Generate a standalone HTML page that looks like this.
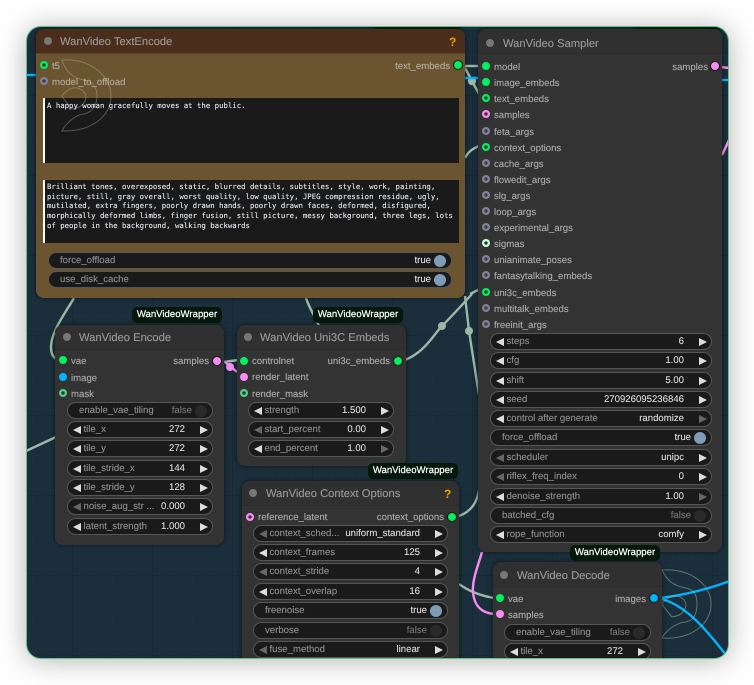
<!DOCTYPE html>
<html><head><meta charset="utf-8">
<style>
html,body{margin:0;padding:0;background:#fff;width:754px;height:685px;overflow:hidden}
body{font-family:"Liberation Sans",Arial,sans-serif;text-rendering:geometricPrecision}
#f{position:absolute;left:26px;top:26px;width:701px;height:631px;border:1px solid #62c083;border-radius:15px;overflow:hidden;background-color:#1a2e3b;box-shadow:0 2px 28px rgba(0,0,0,.3)}
#i{position:absolute;left:-27px;top:-27px;width:754px;height:685px;filter:blur(.25px);
background-image:linear-gradient(#172933 1px,transparent 1px),linear-gradient(90deg,#172933 1px,transparent 1px),linear-gradient(#1c303d 1px,transparent 1px),linear-gradient(90deg,#1c303d 1px,transparent 1px);
background-size:80px 80px,80px 80px,10px 10px,10px 10px;background-position:-8px 15px,-8px 15px,2px 5px,2px 5px}
.n{position:absolute;background:#333;border-radius:8px;box-shadow:0 0 5px rgba(0,0,0,.55)}
.h{position:absolute;left:0;right:0;top:0;height:24px;background:#303030;border-bottom:1px solid #2b2b2b;border-radius:8px 8px 0 0}
.a{position:absolute;white-space:nowrap}
.ti{font-size:11.2px;line-height:16px;color:#999;margin-top:1px;-webkit-text-stroke:.12px #999}
.b{width:8px;height:8px;border-radius:50%;background:#777}
.q{font-size:12px;font-weight:bold;color:#f0a000;line-height:14px;margin-top:0}
.s{width:8px;height:8px;border-radius:50%;box-sizing:border-box}
.l{font-size:9.6px;line-height:14px;color:#aaa;margin-top:2px;-webkit-text-stroke:.12px #aaa}
.g{background:#00f060}.c{background:#00b4ff}.p{background:#f78cf0}
.rg{background:radial-gradient(circle,#2f3a30 1.4px,#00f060 2px)}
.rp{background:radial-gradient(circle,#333 1.4px,#f78cf0 2px)}
.rx{background:radial-gradient(circle,#3f3f3f 1.4px,#80809a 2px)}
.rm{background:radial-gradient(circle,#333 1.4px,#4fd184 2px)}
.rw{background:radial-gradient(circle,#333 1.4px,#c8ffdc 2px)}
.o{box-shadow:0 0 0 1px #111}
.w{position:absolute;height:15px;box-sizing:content-box;border:1px solid #565656;border-radius:9px;background:#1a1a1a;font-size:9.6px;line-height:16px;color:#8f8f8f;white-space:nowrap;-webkit-text-stroke:.1px}
.w u{text-decoration:none;position:absolute;left:15.5px}
.w b{font-weight:normal;position:absolute;right:27px;color:#ddd}
.w i{position:absolute;top:3.5px;width:0;height:0;border-top:4px solid transparent;border-bottom:4px solid transparent}
.w i.x{left:4.5px;border-right:8px solid #ddd}
.w i.y{right:4.5px;border-left:8px solid #ddd}
.w i.d{opacity:.4}
.t u{left:11px}
.t b{right:20px}
.t s{position:absolute;right:5px;top:1.5px;width:12px;height:12px;border-radius:50%;background:#809bb5}
.t s.f{background:#2a2a2a}
.t b.f{color:#777}
.tag{position:absolute;width:90px;height:16px;border-radius:5px;background:#04190c;color:#fff;font-size:9.6px;line-height:16px;text-align:center;-webkit-text-stroke:.2px #fff}
.ta{position:absolute;left:43px;width:412px;background:#1a1a1a;border-left:2px solid #fff;font-family:"DejaVu Sans Mono",monospace;font-size:7.34px;line-height:9.7px;color:#e6ecf2;white-space:pre;padding:2px 0 0 2px;box-sizing:content-box;-webkit-text-stroke:.08px}
.ta span{position:relative;display:block}
svg{position:absolute;left:0;top:0}
</style></head><body>
<div id="f"><div id="i">

<svg width="754" height="685" fill="none">
<g stroke="#9db8a8" stroke-width="2.4">
<path d="M74 298C66 312 52 330 51 346C51 352 52 356 56 359"/>
<path d="M26 451L56 437"/>
<path d="M306 298C309 308 315 316 319 326"/>
<path d="M405 360C425 352 434 334 442 326C450 318 462 305 472 294"/>
<path d="M465 296L469 331L479 395"/>
<path d="M464 66H479"/>
<path d="M465 68L479 94"/>
<path d="M465 158C468 152 472 149 479 146"/>
<path d="M224 362L238 360"/>
<path d="M459 516C470 512 477 503 479 490"/>
<path d="M459 584C470 592 482 596 494 598"/>
<path d="M470 294L480 289"/>
</g>
<circle cx="472" cy="81" r="4.2" fill="#9db8a8"/>
<circle cx="442" cy="326" r="4" fill="#9db8a8"/>
<circle cx="469" cy="331" r="4" fill="#9db8a8"/>
<g stroke="#f78cf0" stroke-width="2.4">
<path d="M225 362L237 372"/>
<path d="M482 552C478 566 472 580 473 592C474 606 482 613 494 614"/>
<path d="M720 67L730 68"/>
<path d="M722 155L730 138"/>
</g>
<circle cx="230" cy="367" r="4" fill="#f78cf0"/>
<g stroke="#00b4ff" stroke-width="2.4">
<path d="M26 75H37"/>
<path d="M465 78H480"/>
<path d="M720 80H730"/>
<path d="M658 598C680 596 705 590 730 581"/>
<path d="M658 598C685 604 705 628 726 655"/>
</g>
<g stroke="#9cc4a8" stroke-opacity=".5" stroke-width="1">
<path d="M662 570C690 568 711 584 711 604C711 625 690 640 662 638C666 630 678 622 686 622C695 620 697 612 697 604C697 596 695 590 686 588C673 586 667 580 662 570Z"/>
<path d="M662 604C666 598 672 595 677 596C683 597 686 602 686 605C685 612 680 616 672 617C668 612 665 609 662 604Z"/>
</g>
</svg>

<div class="n" style="left:36px;top:29px;width:429px;height:269px;background:#6b5430">
<div class="h" style="background:#4a2d1a;border-bottom:1px solid #5a4225"></div>
</div>
<div class="b a" style="left:44px;top:37px"></div>
<div class="a ti" style="left:60px;top:33px">WanVideo TextEncode</div>
<div class="a q" style="left:449px;top:35px">?</div>
<div class="a s rg" style="left:40px;top:60.5px"></div>
<div class="a l" style="left:52px;top:58px;color:#b5ab98">t5</div>
<div class="a s rx" style="left:40px;top:77px"></div>
<div class="a l" style="left:52px;top:74px;color:#b5ab98">model_to_offload</div>
<div class="a l" style="right:304px;top:58px;color:#b5ab98">text_embeds</div>
<div class="a s g o" style="left:454px;top:61px"></div>

<div class="ta" style="top:98px;height:63px"><span style="top:1px">A happy woman gracefully moves at the public.</span></div>
<div class="ta" style="top:180px;height:61px"><span>Brilliant tones, overexposed, static, blurred details, subtitles, style, work, painting,
picture, still, gray overall, worst quality, low quality, JPEG compression residue, ugly,
mutilated, extra fingers, poorly drawn hands, poorly drawn faces, deformed, disfigured,
morphically deformed limbs, finger fusion, still picture, messy background, three legs, lots
of people in the background, walking backwards</span></div>

<div class="w t" style="left:48px;top:252px;width:402px"><u>force_offload</u><b>true</b><s></s></div>
<div class="w t" style="left:48px;top:271px;width:402px"><u>use_disk_cache</u><b>true</b><s></s></div>

<svg width="754" height="685" fill="none"><g stroke="#b8d0bc" stroke-opacity=".35" stroke-width="1">
<path d="M62 60C90 58 111 76 111 96C111 117 90 132 62 131C66 122 78 114 84 114C93 112 97 104 97 96C97 88 93 82 84 80C71 78 65 70 62 60Z"/>
<path d="M62 96C66 90 72 87 77 88C83 89 86 94 86 97C85 104 80 108 72 109C68 104 65 101 62 96Z"/>
</g></svg>

<div class="n" style="left:478px;top:29px;width:244px;height:523px">
<div class="h" style="height:24px"></div>
</div>
<div class="b a" style="left:486px;top:38.5px"></div>
<div class="a ti" style="left:503px;top:35px">WanVideo Sampler</div>
<div class="a l" style="right:46px;top:59px">samples</div>
<div class="a s p o" style="left:711px;top:62px"></div>

<div class="a s g" style="left:482px;top:62px"></div><div class="a l" style="left:494px;top:59px">model</div>
<div class="a s g" style="left:482px;top:78px"></div><div class="a l" style="left:494px;top:75px">image_embeds</div>
<div class="a s rg" style="left:482px;top:94px"></div><div class="a l" style="left:494px;top:91px">text_embeds</div>
<div class="a s rp" style="left:482px;top:110px"></div><div class="a l" style="left:494px;top:107px">samples</div>
<div class="a s rx" style="left:482px;top:127px"></div><div class="a l" style="left:494px;top:124px">feta_args</div>
<div class="a s rg" style="left:482px;top:143px"></div><div class="a l" style="left:494px;top:140px">context_options</div>
<div class="a s rx" style="left:482px;top:159px"></div><div class="a l" style="left:494px;top:156px">cache_args</div>
<div class="a s rx" style="left:482px;top:175px"></div><div class="a l" style="left:494px;top:172px">flowedit_args</div>
<div class="a s rx" style="left:482px;top:191px"></div><div class="a l" style="left:494px;top:188px">slg_args</div>
<div class="a s rx" style="left:482px;top:207px"></div><div class="a l" style="left:494px;top:204px">loop_args</div>
<div class="a s rx" style="left:482px;top:223px"></div><div class="a l" style="left:494px;top:220px">experimental_args</div>
<div class="a s rw" style="left:482px;top:239px"></div><div class="a l" style="left:494px;top:236px">sigmas</div>
<div class="a s rx" style="left:482px;top:255px"></div><div class="a l" style="left:494px;top:252px">unianimate_poses</div>
<div class="a s rx" style="left:482px;top:271px"></div><div class="a l" style="left:494px;top:268px">fantasytalking_embeds</div>
<div class="a s rg" style="left:482px;top:288px"></div><div class="a l" style="left:494px;top:285px">uni3c_embeds</div>
<div class="a s rx" style="left:482px;top:304px"></div><div class="a l" style="left:494px;top:301px">multitalk_embeds</div>
<div class="a s rx" style="left:482px;top:320px"></div><div class="a l" style="left:494px;top:317px">freeinit_args</div>

<div class="w" style="left:490px;top:333px;width:220px"><i class="x"></i><u>steps</u><b>6</b><i class="y"></i></div>
<div class="w" style="left:490px;top:352px;width:220px"><i class="x"></i><u>cfg</u><b>1.00</b><i class="y"></i></div>
<div class="w" style="left:490px;top:372px;width:220px"><i class="x"></i><u>shift</u><b>5.00</b><i class="y"></i></div>
<div class="w" style="left:490px;top:391px;width:220px"><i class="x"></i><u>seed</u><b>270926095236846</b><i class="y"></i></div>
<div class="w" style="left:490px;top:410px;width:220px"><i class="x"></i><u>control after generate</u><b>randomize</b><i class="y d"></i></div>
<div class="w t" style="left:490px;top:429px;width:220px"><u>force_offload</u><b>true</b><s></s></div>
<div class="w" style="left:490px;top:449px;width:220px"><i class="x d"></i><u>scheduler</u><b>unipc</b><i class="y"></i></div>
<div class="w" style="left:490px;top:468px;width:220px"><i class="x d"></i><u>riflex_freq_index</u><b>0</b><i class="y"></i></div>
<div class="w" style="left:490px;top:488px;width:220px"><i class="x"></i><u>denoise_strength</u><b>1.00</b><i class="y d"></i></div>
<div class="w t" style="left:490px;top:507px;width:220px"><u>batched_cfg</u><b class="f">false</b><s class="f"></s></div>
<div class="w" style="left:490px;top:526px;width:220px"><i class="x"></i><u>rope_function</u><b>comfy</b><i class="y"></i></div>

<div class="n" style="left:55px;top:325px;width:169px;height:220px"><div class="h"></div></div>
<div class="b a" style="left:63px;top:333px"></div>
<div class="a ti" style="left:79px;top:329px">WanVideo Encode</div>
<div class="a s g" style="left:59px;top:356px"></div><div class="a l" style="left:71px;top:353px">vae</div>
<div class="a s c" style="left:59px;top:373px"></div><div class="a l" style="left:71px;top:370px">image</div>
<div class="a s rm" style="left:59px;top:389px"></div><div class="a l" style="left:71px;top:386px">mask</div>
<div class="a l" style="right:545px;top:353px">samples</div>
<div class="a s p o" style="left:213px;top:357px"></div>
<div class="w t" style="left:67px;top:402px;width:144px"><u>enable_vae_tiling</u><b class="f">false</b><s class="f"></s></div>
<div class="w" style="left:67px;top:421px;width:144px"><i class="x"></i><u>tile_x</u><b>272</b><i class="y"></i></div>
<div class="w" style="left:67px;top:440px;width:144px"><i class="x"></i><u>tile_y</u><b>272</b><i class="y"></i></div>
<div class="w" style="left:67px;top:460px;width:144px"><i class="x"></i><u>tile_stride_x</u><b>144</b><i class="y"></i></div>
<div class="w" style="left:67px;top:479px;width:144px"><i class="x"></i><u>tile_stride_y</u><b>128</b><i class="y"></i></div>
<div class="w" style="left:67px;top:498px;width:144px"><i class="x d"></i><u>noise_aug_str ...</u><b>0.000</b><i class="y"></i></div>
<div class="w" style="left:67px;top:518px;width:144px"><i class="x"></i><u>latent_strength</u><b>1.000</b><i class="y"></i></div>

<div class="n" style="left:237px;top:325px;width:169px;height:141px"><div class="h"></div></div>
<div class="b a" style="left:244px;top:333px"></div>
<div class="a ti" style="left:260px;top:329px">WanVideo Uni3C Embeds</div>
<div class="a s g" style="left:240px;top:356.5px"></div><div class="a l" style="left:252px;top:353px">controlnet</div>
<div class="a s p" style="left:240px;top:372.5px"></div><div class="a l" style="left:252px;top:369px">render_latent</div>
<div class="a s rm" style="left:240px;top:389px"></div><div class="a l" style="left:252px;top:386px">render_mask</div>
<div class="a l" style="right:364px;top:353px">uni3c_embeds</div>
<div class="a s g o" style="left:394px;top:356.5px"></div>
<div class="w" style="left:248px;top:402px;width:144px"><i class="x"></i><u>strength</u><b>1.500</b><i class="y"></i></div>
<div class="w" style="left:248px;top:421px;width:144px"><i class="x d"></i><u>start_percent</u><b>0.00</b><i class="y"></i></div>
<div class="w" style="left:248px;top:440px;width:144px"><i class="x"></i><u>end_percent</u><b>1.00</b><i class="y d"></i></div>

<div class="n" style="left:242px;top:481px;width:217px;height:200px"><div class="h"></div></div>
<div class="b a" style="left:249px;top:489px"></div>
<div class="a ti" style="left:266px;top:485px">WanVideo Context Options</div>
<div class="a q" style="left:444px;top:487px">?</div>
<div class="a s rp" style="left:246px;top:512.5px"></div><div class="a l" style="left:258px;top:509px">reference_latent</div>
<div class="a l" style="right:310px;top:509px">context_options</div>
<div class="a s g o" style="left:448px;top:512.5px"></div>
<div class="w" style="left:253px;top:525px;width:193px"><i class="x d"></i><u>context_sched...</u><b>uniform_standard</b><i class="y"></i></div>
<div class="w" style="left:253px;top:544px;width:193px"><i class="x"></i><u>context_frames</u><b>125</b><i class="y"></i></div>
<div class="w" style="left:253px;top:563px;width:193px"><i class="x d"></i><u>context_stride</u><b>4</b><i class="y"></i></div>
<div class="w" style="left:253px;top:583px;width:193px"><i class="x"></i><u>context_overlap</u><b>16</b><i class="y"></i></div>
<div class="w t" style="left:253px;top:602px;width:193px"><u>freenoise</u><b>true</b><s></s></div>
<div class="w t" style="left:253px;top:622px;width:193px"><u>verbose</u><b class="f">false</b><s class="f"></s></div>
<div class="w" style="left:253px;top:641px;width:193px"><i class="x d"></i><u>fuse_method</u><b>linear</b><i class="y"></i></div>

<div class="n" style="left:493px;top:562px;width:169px;height:120px"><div class="h"></div></div>
<div class="b a" style="left:500px;top:571px"></div>
<div class="a ti" style="left:517px;top:567px">WanVideo Decode</div>
<div class="a s g" style="left:496px;top:594px"></div><div class="a l" style="left:508px;top:591px">vae</div>
<div class="a s p" style="left:496px;top:610px"></div><div class="a l" style="left:508px;top:607px">samples</div>
<div class="a l" style="right:108px;top:591px">images</div>
<div class="a s c o" style="left:650px;top:594px"></div>
<div class="w t" style="left:504px;top:624px;width:145px"><u>enable_vae_tiling</u><b class="f">false</b><s class="f"></s></div>
<div class="w" style="left:504px;top:643px;width:145px"><i class="x"></i><u>tile_x</u><b>272</b><i class="y"></i></div>

<div class="tag" style="left:132px;top:307px">WanVideoWrapper</div>
<div class="tag" style="left:313px;top:307px">WanVideoWrapper</div>
<div class="tag" style="left:368px;top:463px">WanVideoWrapper</div>
<div class="tag" style="left:570px;top:545px">WanVideoWrapper</div>
<div class="tag" style="left:373px;top:13px">&#8203;</div>
<div class="tag" style="left:632px;top:13px">&#8203;</div>

</div></div>
</body></html>
